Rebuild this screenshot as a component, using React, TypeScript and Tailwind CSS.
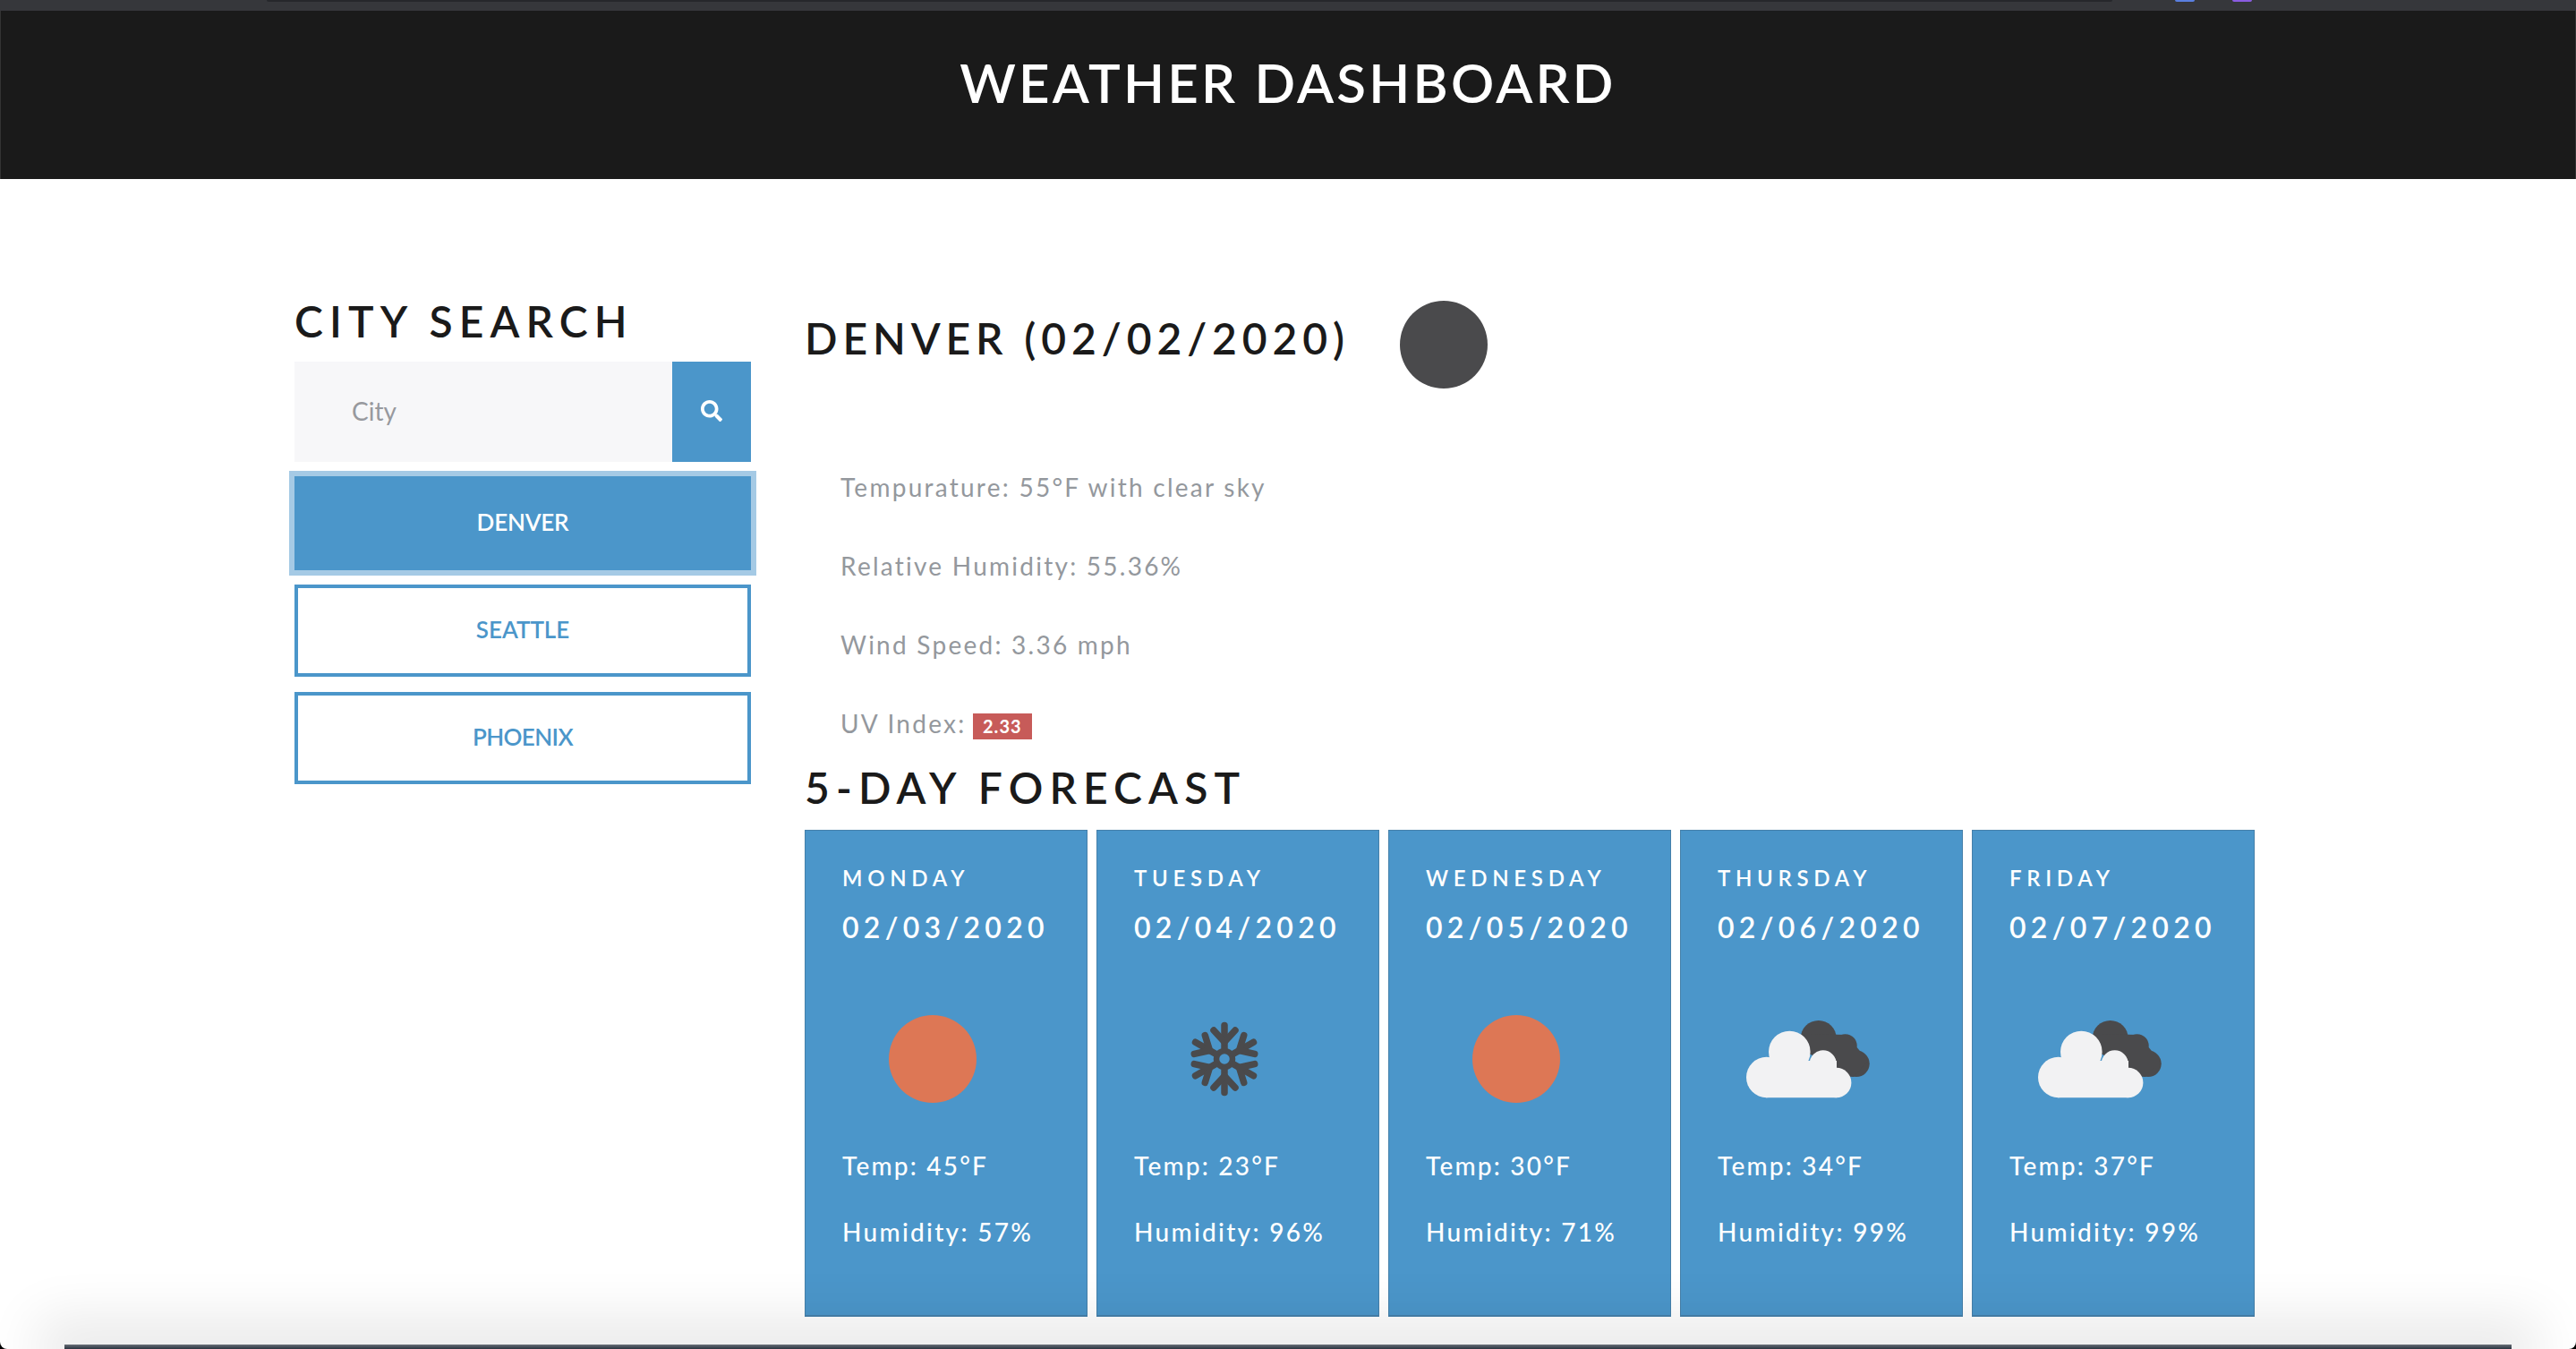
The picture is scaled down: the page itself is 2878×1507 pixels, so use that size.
import { FaSearch } from 'react-icons/fa'

const forecast = [
  { day: 'MONDAY', date: '02/03/2020', icon: 'sun', temp: '45', humidity: '57' },
  { day: 'TUESDAY', date: '02/04/2020', icon: 'snow', temp: '23', humidity: '96' },
  { day: 'WEDNESDAY', date: '02/05/2020', icon: 'sun', temp: '30', humidity: '71' },
  { day: 'THURSDAY', date: '02/06/2020', icon: 'cloud', temp: '34', humidity: '99' },
  { day: 'FRIDAY', date: '02/07/2020', icon: 'cloud', temp: '37', humidity: '99' },
]

function Snowflake() {
  return (
    <svg width="86" height="86" viewBox="-43 -43 86 86" fill="none" stroke="#4a4a4c" strokeLinecap="round">
      <circle r="9" strokeWidth="6.5" />
      {[0, 60, 120, 180, 240, 300].map((angle) => (
        <g key={angle} transform={`rotate(${angle})`} strokeWidth="7.5">
          <path d="M0 -12V-37.5" />
          <path d="M-12 -32L0 -19L12 -32" strokeLinejoin="round" />
        </g>
      ))}
    </svg>
  )
}

function Cloud() {
  return (
    <svg width="138" height="87" viewBox="0 0 138 87">
      <g fill="#4a4a4c">
        <circle cx="80.7" cy="20" r="20" />
        <circle cx="110.7" cy="28.3" r="13" />
        <circle cx="123" cy="48.3" r="14.7" />
        <path d="M70 15L112 16L136 45L120 63L100 62L70 35Z" />
      </g>
      <g fill="#f2f2f3">
        <circle cx="22.7" cy="63.5" r="22.7" />
        <circle cx="48.3" cy="35" r="23.3" />
        <circle cx="85.7" cy="48.3" r="15" />
        <circle cx="100.7" cy="69.5" r="16.7" />
        <rect x="22" y="45" width="79" height="41.2" />
      </g>
    </svg>
  )
}

function WeatherIcon({ icon }: { icon: string }) {
  if (icon === 'sun') return <div className="h-[98px] w-[98px] rounded-full bg-[#dd7755]" />
  if (icon === 'snow') return <Snowflake />
  return <Cloud />
}

export default function App() {
  return (
    <div className="h-[1507px] overflow-hidden bg-black">
      <div className="relative h-full overflow-hidden rounded-b-[8px] bg-white font-['Lato',sans-serif] text-[#1a1a1a]">
        {/* browser chrome sliver */}
        <div className="flex h-3 items-start bg-[#36373b]">
          <div className="ml-[298px] h-[2px] w-[2062px] rounded-b bg-[#26272b]" />
          <div className="ml-[70px] h-[2px] w-[22px] rounded-b bg-[#5a7fe0]" />
          <div className="ml-[42px] h-[2px] w-[22px] rounded-b bg-[#8a5ce0]" />
        </div>

        <header className="flex h-[188px] justify-center border-x border-[#333333] bg-[#1a1a1a] pt-[44px]">
          <h1 className="text-[60px] leading-[72px] font-semibold tracking-[3.2px] text-white">WEATHER DASHBOARD</h1>
        </header>

        <main className="mx-auto flex w-[2220px] gap-[60px] pt-[130px]">
          <aside className="w-[510px]">
            <h2 className="mb-4 text-[48px] leading-[58px] font-semibold tracking-[7.1px]">CITY SEARCH</h2>
            <div className="flex h-[112px]">
              <input
                placeholder="City"
                className="min-w-0 flex-1 bg-[#f7f7f9] pb-[2px] pl-16 text-[28px] outline-none placeholder:text-[#97999e]"
              />
              <button className="flex w-[88px] items-center justify-center bg-[#4b96ca] pb-[2px] text-white">
                <FaSearch className="h-6 w-6" />
              </button>
            </div>
            <button className="mt-4 h-[105px] w-full bg-[#4b96ca] pb-[2px] text-[26px] font-semibold tracking-[-0.2px] text-white ring-[6px] ring-[#a5cae5]">
              DENVER
            </button>
            <button className="mt-4 h-[103px] w-full border-4 border-[#4b96ca] pb-[2px] text-[26px] font-semibold text-[#4b96ca]">
              SEATTLE
            </button>
            <button className="mt-[17px] h-[103px] w-full border-4 border-[#4b96ca] pb-[2px] text-[26px] font-semibold tracking-[-0.6px] text-[#4b96ca]">
              PHOENIX
            </button>
          </aside>

          <section className="flex-1">
            <div className="flex items-start">
              <h2 className="mt-[19px] text-[48px] leading-[58px] font-semibold tracking-[5.9px]">DENVER (02/02/2020)</h2>
              <div className="mt-[6px] ml-[56px] h-[98px] w-[98px] rounded-full bg-[#4a4a4c]" />
            </div>

            <div className="mt-[90px] space-y-12 pl-10 text-[28px] leading-10 tracking-[2.25px] text-[#94989d]">
              <p>Tempurature: 55°F with clear sky</p>
              <p>Relative Humidity: 55.36%</p>
              <p>Wind Speed: 3.36 mph</p>
              <p>
                UV Index:{' '}
                <span className="-ml-0.5 inline-block h-[29px] bg-[#c75b59] px-[11px] align-middle text-[20px] leading-[29px] font-bold tracking-[1.1px] text-white">
                  2.33
                </span>
              </p>
            </div>

            <h2 className="mt-[23px] mb-[18px] text-[48px] leading-[58px] font-semibold tracking-[7.1px]">5-DAY FORECAST</h2>

            <div className="flex gap-[10px]">
              {forecast.map((item) => (
                <div
                  key={item.day}
                  className="h-[544px] w-[316px] border border-b-2 border-[#4580aa] bg-[#4b96ca] pt-[37px] pl-[41px] text-white"
                >
                  <div className="text-[24px] leading-8 font-semibold tracking-[5.7px]">{item.day}</div>
                  <div className="mt-[19px] text-[32px] leading-10 font-semibold tracking-[5.3px]">{item.date}</div>
                  <div className="mt-[78px] flex h-[98px] w-[202px] items-center justify-center">
                    <WeatherIcon icon={item.icon} />
                  </div>
                  <div className="mt-[50px] text-[28px] leading-10 font-medium tracking-[2.2px]">Temp: {item.temp}°F</div>
                  <div className="mt-[34px] text-[28px] leading-10 font-medium tracking-[2.3px]">Humidity: {item.humidity}%</div>
                </div>
              ))}
            </div>
          </section>
        </main>

        {/* window shadow along the bottom edge */}
        <div className="pointer-events-none absolute inset-x-[72px] bottom-0 h-[5px] bg-gradient-to-b from-[#6a7078] to-[#2a3440] shadow-[0_0_60px_30px_rgba(0,0,0,0.09)]" />
      </div>
    </div>
  )
}
